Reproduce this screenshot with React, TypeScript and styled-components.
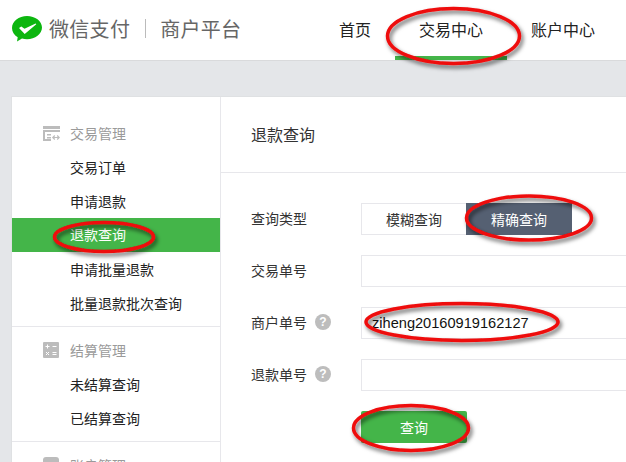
import React from "react";
import styled, { createGlobalStyle } from "styled-components";

const Global = createGlobalStyle`
  html, body { margin: 0; padding: 0; height: 100%; overflow: hidden; background: #e4e6e9; }
  body { font-family: "Noto Sans CJK SC", "Liberation Sans", sans-serif; color: #222; }
  * { box-sizing: border-box; }
`;
const Page = styled.div`
  position: relative;
  width: 626px;
  height: 462px;
  overflow: hidden;
  background: #e4e6e9;
`;
const Header = styled.header`
  display: flex;
  align-items: stretch;
  justify-content: space-between;
  height: 61px;
  width: 626px;
  padding: 0 7px 0 12px;
  background: #fff;
  border-bottom: 1px solid #d9dadc;
`;
const Brand = styled.div`
  display: flex;
  align-items: center;
  color: #666;
  font-size: 20px;
  letter-spacing: 0.3px;
  line-height: 28px;
  padding-bottom: 3px;
`;
const BrandName = styled.span`
  margin-left: 7px;
`;
const BrandSep = styled.span`
  width: 1px;
  height: 19px;
  background: #bbb;
  margin: 0 14px 0 15px;
`;
const Nav = styled.nav`
  display: flex;
`;
const NavItem = styled.a<{ $active?: boolean }>`
  padding: 0 24px;
  font-size: 16px;
  line-height: 58px;
  height: 60px;
  color: #222;
  border-bottom: 4px solid ${(p) => (p.$active ? "#44b549" : "transparent")};
`;
const Card = styled.main`
  display: flex;
  width: 800px;
  height: 500px;
  margin: 35px 0 0 11px;
  background: #fff;
  border: 1px solid #dfe1e3;
  border-right: 0;
`;
const Sidebar = styled.aside`
  width: 209px;
  flex: none;
  border-right: 1px solid #e7e7eb;
`;
const Group = styled.section<{ $first?: boolean }>`
  padding: ${(p) => (p.$first ? "19px 0 6px" : "6px 0 6px")};
  border-bottom: 1px solid #e7e7eb;
`;
const GroupTitle = styled.div`
  display: flex;
  align-items: center;
  height: 34px;
  padding-left: 31px;
  font-size: 14px;
  color: #9a9a9a;
`;
const GroupIcon = styled.svg`
  width: 17px;
  height: 17px;
  margin-right: 10px;
  flex: none;
`;
const MenuItem = styled.a<{ $active?: boolean }>`
  display: block;
  height: 34px;
  line-height: ${(p) => (p.$active ? "33px" : "35px")};
  padding-left: 58px;
  font-size: 14px;
  color: ${(p) => (p.$active ? "#fff" : "#222")};
  background: ${(p) => (p.$active ? "#44b549" : "transparent")};
`;
const Content = styled.section`
  flex: 1;
`;
const Title = styled.h2`
  margin: 0;
  height: 76px;
  padding-left: 30px;
  font-size: 16px;
  font-weight: 400;
  line-height: 74px;
  color: #333;
  border-bottom: 1px solid #e7e7eb;
`;
const Form = styled.form`
  display: flex;
  flex-direction: column;
  gap: 20px;
  padding: 30px 0 0 30px;
`;
const Row = styled.div`
  display: flex;
  align-items: center;
  height: 32px;
`;
const Label = styled.label`
  display: flex;
  align-items: center;
  width: 110px;
  flex: none;
  font-size: 14px;
  color: #333;
  padding-bottom: 2px;
`;
const Help = styled.span`
  display: inline-flex;
  align-items: center;
  justify-content: center;
  width: 16px;
  height: 16px;
  margin-left: 8px;
  border-radius: 50%;
  background: #bdbdbd;
  color: #fff;
  font: 700 12px "Liberation Sans", sans-serif;
`;
const Toggle = styled.div`
  display: flex;
  height: 32px;
`;
const ToggleBtn = styled.button<{ $active?: boolean }>`
  width: ${(p) => (p.$active ? "106px" : "105px")};
  height: 32px;
  padding: 0;
  font: 400 14px "Noto Sans CJK SC", sans-serif;
  color: ${(p) => (p.$active ? "#fff" : "#333")};
  background: ${(p) => (p.$active ? "#556072" : "#fff")};
  border: 1px solid ${(p) => (p.$active ? "#556072" : "#e7e7eb")};
  border-right: ${(p) => (p.$active ? "1px solid #556072" : "0")};
`;
const Input = styled.input`
  width: 400px;
  height: 32px;
  padding: 0 10px;
  border: 1px solid #e7e7eb;
  outline: 0;
  background: #fff;
  color: #111;
  font: 14.6px "Liberation Sans", sans-serif;
`;
const Submit = styled.button`
  width: 106px;
  height: 32px;
  margin: 0 0 0 110px;
  padding: 0;
  border: 0;
  border-radius: 2px;
  background: #44b549;
  color: #fff;
  font: 400 14px "Noto Sans CJK SC", sans-serif;
`;
const Marks = styled.svg`
  position: absolute;
  inset: 0;
  width: 626px;
  height: 462px;
  pointer-events: none;
`;

const marks = [
  [453.5, 36, 66, 27.5],
  [104, 237, 49.5, 14.5],
  [529, 218, 62.5, 22],
  [462, 322, 96, 18.5],
  [411, 428, 57.5, 22.5],
];

const LedgerIcon = () => (
  <GroupIcon viewBox="0 0 17 17" fill="#bcbcbc">
    <rect x="0" y="1" width="17" height="3" />
    <path d="M0 5h17v2H2v7h6v2H0z" />
    <path d="M4 9h4v1.500H4zM4 12h4v1.500H4z" />
    <path d="M10 12.500h6M11.800 10.500l-2 2 2 2M14.200 10.500l2 2-2 2" fill="none" stroke="#bcbcbc" strokeWidth="1.200" />
  </GroupIcon>
);
const CalcIcon = () => (
  <GroupIcon viewBox="0 0 17 17">
    <rect width="16" height="16" rx="1" fill="#bcbcbc" />
    <path d="M2.500 4.500h4M4.500 2.500v4M9.500 4.500h4M3 10l3 3M6 10l-3 3M9.500 10.500h4M9.500 12.500h4" stroke="#fff" />
  </GroupIcon>
);
const AccountIcon = () => (
  <GroupIcon viewBox="0 0 17 17">
    <rect width="16" height="16" rx="3" fill="#bcbcbc" />
  </GroupIcon>
);

export default function App() {
  return (
    <Page>
      <Global />
      <Header>
        <Brand>
          <svg width="30" height="27" viewBox="0 0 30 27">
            <path d="M15 1C6.900 1 0 6.300 0 13c0 3.800 2.200 7.100 5.700 9.300L5 26.500l5-2.900c1.600.5 3.300.7 5 .7 8.100 0 15-5.200 15-11.700S23.100 1 15 1z" fill="#0cb60f" />
            <path d="M7 13l2.300-1.600 3.200 2.300L23.600 8.600l.7.7L12.700 19z" fill="#fff" />
          </svg>
          <BrandName>微信支付</BrandName>
          <BrandSep />
          <span>商户平台</span>
        </Brand>
        <Nav>
          <NavItem>首页</NavItem>
          <NavItem $active>交易中心</NavItem>
          <NavItem>账户中心</NavItem>
        </Nav>
      </Header>
      <Card>
        <Sidebar>
          <Group $first>
            <GroupTitle><LedgerIcon />交易管理</GroupTitle>
            <MenuItem>交易订单</MenuItem>
            <MenuItem>申请退款</MenuItem>
            <MenuItem $active>退款查询</MenuItem>
            <MenuItem>申请批量退款</MenuItem>
            <MenuItem>批量退款批次查询</MenuItem>
          </Group>
          <Group>
            <GroupTitle><CalcIcon />结算管理</GroupTitle>
            <MenuItem>未结算查询</MenuItem>
            <MenuItem>已结算查询</MenuItem>
          </Group>
          <Group>
            <GroupTitle><AccountIcon />账户管理</GroupTitle>
          </Group>
        </Sidebar>
        <Content>
          <Title>退款查询</Title>
          <Form>
            <Row>
              <Label>查询类型</Label>
              <Toggle>
                <ToggleBtn type="button">模糊查询</ToggleBtn>
                <ToggleBtn type="button" $active>精确查询</ToggleBtn>
              </Toggle>
            </Row>
            <Row>
              <Label>交易单号</Label>
              <Input readOnly />
            </Row>
            <Row>
              <Label>商户单号<Help>?</Help></Label>
              <Input readOnly value="ziheng20160919162127" />
            </Row>
            <Row>
              <Label>退款单号<Help>?</Help></Label>
              <Input readOnly />
            </Row>
            <Row>
              <Submit type="button">查询</Submit>
            </Row>
          </Form>
        </Content>
      </Card>
      <Marks viewBox="0 0 626 462">
        <defs>
          <filter id="soft" x="-20%" y="-40%" width="140%" height="180%">
            <feDropShadow dx="2" dy="3" stdDeviation="2" floodColor="#000" floodOpacity="0.6" />
          </filter>
        </defs>
        {marks.map(([cx, cy, rx, ry]) => (
          <ellipse key={cx} cx={cx} cy={cy} rx={rx} ry={ry} fill="none" stroke="#ee0a0a" strokeWidth="3.5" filter="url(#soft)" />
        ))}
      </Marks>
    </Page>
  );
}
